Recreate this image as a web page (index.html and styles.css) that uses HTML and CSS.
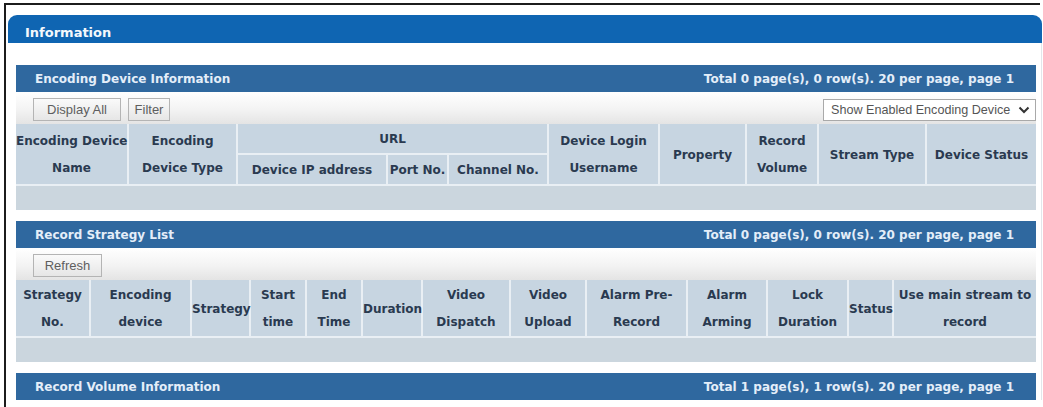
FILE: index.html
```html
<!DOCTYPE html>
<html lang="en">

<head>
  <meta charset="UTF-8" />
  <title>Information</title>
  <meta name="viewport" content="width=device-width, initial-scale=1.0" />
  <link rel="stylesheet" href="styles.css">
</head>

<body>

  <div class="frame">
    <div class="panel">
      <div class="panel-title">Information</div>

      <div class="panel-body">

        <!-- Encoding devices -->
        <section class="block">
          <div class="block-bar">
            <span>Encoding Device Information</span>
            <span>Total 0 page(s), 0 row(s). 20 per page, page 1</span>
          </div>
          <div class="toolbar">
            <button class="btn btn-wide">Display All</button>
            <button class="btn btn-small">Filter</button>
            <div class="select">
              <span>Show Enabled Encoding Device</span>
              <svg width="12" height="8" viewBox="0 0 12 8">
                <path d="M1.5 1.5 L6 6 L10.5 1.5" fill="none" stroke="#333" stroke-width="2" />
              </svg>
            </div>
          </div>
          <table class="grid">
            <colgroup>
              <col style="width: 112px">
              <col style="width: 109px">
              <col style="width: 150px">
              <col style="width: 61px">
              <col style="width: 100px">
              <col style="width: 111px">
              <col style="width: 87px">
              <col style="width: 72px">
              <col style="width: 108px">
              <col>
            </colgroup>
            <thead>
              <tr>
                <th rowspan="2">Encoding Device<br>Name</th>
                <th rowspan="2">Encoding<br>Device Type</th>
                <th colspan="3">URL</th>
                <th rowspan="2">Device Login<br>Username</th>
                <th rowspan="2">Property</th>
                <th rowspan="2">Record<br>Volume</th>
                <th rowspan="2">Stream Type</th>
                <th rowspan="2">Device Status</th>
              </tr>
              <tr>
                <th>Device IP address</th>
                <th>Port No.</th>
                <th>Channel No.</th>
              </tr>
            </thead>
            <tbody>
              <tr class="empty">
                <td colspan="10"></td>
              </tr>
            </tbody>
          </table>
        </section>

        <!-- Record strategies -->
        <section class="block">
          <div class="block-bar">
            <span>Record Strategy List</span>
            <span>Total 0 page(s), 0 row(s). 20 per page, page 1</span>
          </div>
          <div class="toolbar">
            <button class="btn btn-mid">Refresh</button>
          </div>
          <table class="grid">
            <colgroup>
              <col style="width: 74px">
              <col style="width: 101px">
              <col style="width: 59px">
              <col style="width: 56px">
              <col style="width: 56px">
              <col style="width: 60px">
              <col style="width: 88px">
              <col style="width: 76px">
              <col style="width: 101px">
              <col style="width: 80px">
              <col style="width: 81px">
              <col style="width: 45px">
              <col>
            </colgroup>
            <thead>
              <tr>
                <th>Strategy<br>No.</th>
                <th>Encoding<br>device</th>
                <th>Strategy</th>
                <th>Start<br>time</th>
                <th>End<br>Time</th>
                <th>Duration</th>
                <th>Video<br>Dispatch</th>
                <th>Video<br>Upload</th>
                <th>Alarm Pre-<br>Record</th>
                <th>Alarm<br>Arming</th>
                <th>Lock<br>Duration</th>
                <th>Status</th>
                <th>Use main stream to<br>record</th>
              </tr>
            </thead>
            <tbody>
              <tr class="empty">
                <td colspan="13"></td>
              </tr>
            </tbody>
          </table>
        </section>

        <!-- Record volumes -->
        <section class="block">
          <div class="block-bar">
            <span>Record Volume Information</span>
            <span>Total 1 page(s), 1 row(s). 20 per page, page 1</span>
          </div>
        </section>

      </div>
    </div>
  </div>

</body>

</html>
```

FILE: styles.css
```css
* {
  box-sizing: border-box;
}

body {
  margin: 0;
  padding: 0;
  background-color: #fff;
  font-family: "DejaVu Sans", Verdana, sans-serif;
  overflow: hidden;
}

.frame {
  margin: 3px 0 0 4px;
  width: 1036px;
  height: 420px;
  border-top: 2px solid #1c1c1c;
  border-left: 2px solid #1c1c1c;
}

.panel {
  margin: 10px 0 0 2px;
  width: 1034px;
}

.panel-title {
  height: 28px;
  padding: 4px 0 0 17px;
  background-color: #0f65b2;
  border-radius: 9px 9px 0 0;
  color: #f4f8fc;
  font-size: 13px;
  font-weight: bold;
  line-height: 28px;
}

.panel-body {
  padding: 22px 5px 0 8px;
  border-right: 1px solid #e2e6ea;
}

.block + .block {
  margin-top: 11px;
}

.block-bar {
  display: flex;
  justify-content: space-between;
  height: 27px;
  padding: 1px 22px 0 19px;
  background-color: #2f689f;
  color: #e4eef9;
  font-size: 12px;
  font-weight: bold;
  line-height: 27px;
}

.toolbar {
  display: flex;
  align-items: center;
  gap: 7px;
  height: 32px;
  padding: 0 0 0 17px;
  background: linear-gradient(#ffffff, #f3f3f3 55%, #e4e4e4);
}

.btn {
  height: 23px;
  margin-top: 3px;
  padding: 0;
  border: 1px solid #b4b4b4;
  background: linear-gradient(#fafafa, #e6e6e6);
  color: #5e5e5e;
  font-family: "Liberation Sans", Arial, sans-serif;
  font-size: 13px;
}

.btn-wide {
  width: 88px;
}

.btn-small {
  width: 42px;
}

.btn-mid {
  width: 69px;
}

.select {
  display: flex;
  align-items: center;
  justify-content: space-between;
  width: 213px;
  height: 22px;
  margin: 3px 0 0 auto;
  padding: 0 5px 0 7px;
  border: 1px solid #a9a9a9;
  background-color: #fff;
  color: #555;
  font-family: "Liberation Sans", Arial, sans-serif;
  font-size: 12.6px;
}

.grid {
  width: 100%;
  table-layout: fixed;
  border-collapse: collapse;
}

/* each header row: 2px top pad + 27px line + shared border */
.grid th {
  padding: 2px 0 0;
  border: 2px solid #e9eff4;
  border-top: none;
  background-color: #c7d5e1;
  color: #2a3a50;
  font-size: 12px;
  font-weight: bold;
  line-height: 27px;
  text-align: center;
  white-space: nowrap;
  vertical-align: middle;
}

.grid th:first-child {
  border-left: none;
}

.grid th:last-child {
  border-right: none;
}

.empty td {
  height: 25px;
  padding: 0;
  background-color: #cbd6de;
}
```
